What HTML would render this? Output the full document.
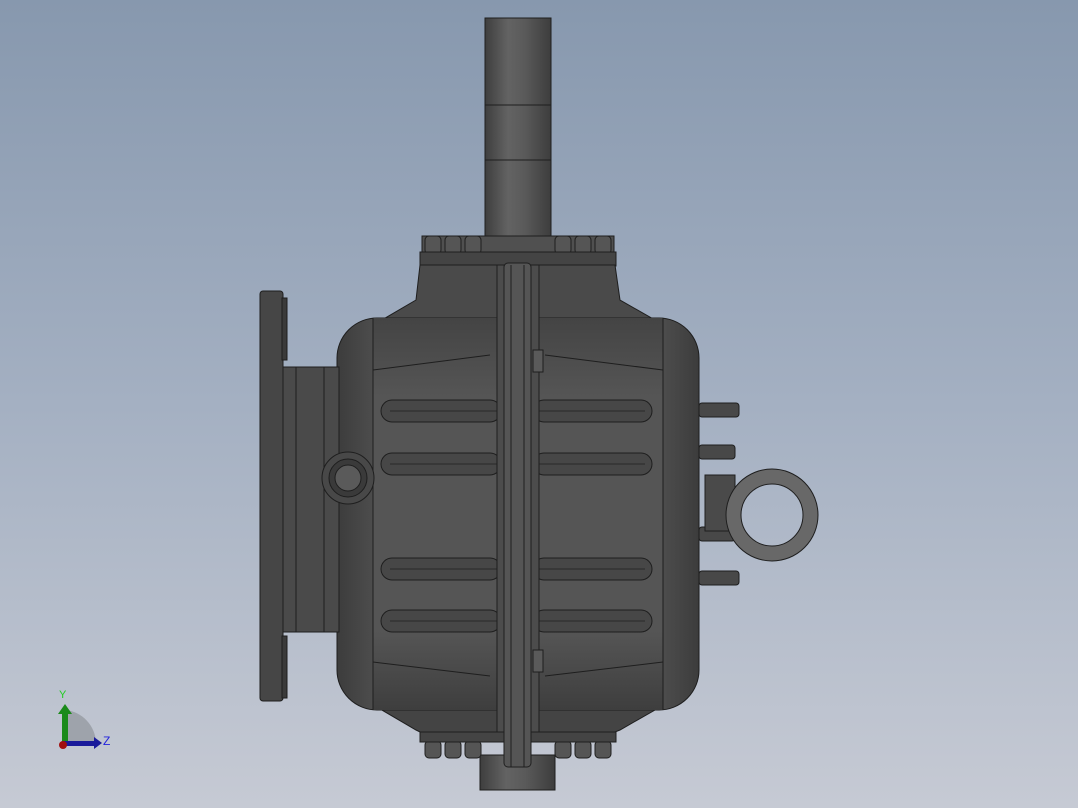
<!DOCTYPE html>
<html><head><style>
html,body{margin:0;padding:0;width:1078px;height:808px;overflow:hidden;}
body{background:linear-gradient(180deg,#8798ae 0%,#a4b0c2 50%,#c6cad4 100%);}
svg{position:absolute;left:0;top:0}
</style></head><body>
<svg width="1078" height="808" viewBox="0 0 1078 808" xmlns="http://www.w3.org/2000/svg">
<defs>
<linearGradient id="sh" x1="0" x2="1" y1="0" y2="0">
<stop offset="0" stop-color="#3e3e3e"/><stop offset="0.35" stop-color="#636363"/><stop offset="0.6" stop-color="#5a5a5a"/><stop offset="1" stop-color="#3d3d3d"/></linearGradient>
<linearGradient id="bd" x1="0" x2="0" y1="0" y2="1">
<stop offset="0" stop-color="#444"/><stop offset="0.2" stop-color="#555"/><stop offset="0.8" stop-color="#555"/><stop offset="1" stop-color="#3e3e3e"/></linearGradient>
<linearGradient id="bh" x1="0" x2="1" y1="0" y2="0">
<stop offset="0" stop-color="#3c3c3c"/><stop offset="0.12" stop-color="#505050"/><stop offset="0.88" stop-color="#505050"/><stop offset="1" stop-color="#3c3c3c"/></linearGradient>
</defs>
<g stroke="#1e1e1e" stroke-width="1">
<rect x="485" y="18" width="66" height="220" fill="url(#sh)"/>
<line x1="485" y1="105" x2="551" y2="105"/><line x1="485" y1="160" x2="551" y2="160"/>
<rect x="480" y="755" width="75" height="35" fill="url(#sh)"/>
<rect x="422" y="236" width="192" height="20" fill="#505050"/>
<g fill="#555"><rect x="425" y="236" width="16" height="18" rx="4"/><rect x="445" y="236" width="16" height="18" rx="4"/><rect x="465" y="236" width="16" height="18" rx="4"/><rect x="555" y="236" width="16" height="18" rx="4"/><rect x="575" y="236" width="16" height="18" rx="4"/><rect x="595" y="236" width="16" height="18" rx="4"/>
<rect x="425" y="741" width="16" height="17" rx="4"/><rect x="445" y="741" width="16" height="17" rx="4"/><rect x="465" y="741" width="16" height="17" rx="4"/><rect x="555" y="741" width="16" height="17" rx="4"/><rect x="575" y="741" width="16" height="17" rx="4"/><rect x="595" y="741" width="16" height="17" rx="4"/></g>
<rect x="420" y="252" width="196" height="14" fill="#444"/>
<rect x="420" y="730" width="196" height="12" fill="#444"/>
<path d="M420 265 L615 265 L620 300 L662 324 L375 324 L416 300 Z" fill="#4a4a4a"/>
<path d="M375 706 L662 706 L620 730 L615 732 L420 732 L416 730 Z" fill="#444"/>
<rect x="337" y="318" width="362" height="392" rx="40" fill="url(#bh)"/>
<rect x="373" y="318" width="290" height="392" fill="url(#bd)" stroke="none"/>
<line x1="373" y1="318" x2="373" y2="710"/><line x1="663" y1="318" x2="663" y2="710"/>
<path d="M373 370 L490 355 M545 355 L663 370 M373 662 L490 676 M545 676 L663 662" fill="none"/>
<rect x="282" y="367" width="57" height="265" fill="#4a4a4a"/>
<line x1="296" y1="367" x2="296" y2="632"/><line x1="324" y1="367" x2="324" y2="632"/>
<rect x="260" y="291" width="23" height="410" rx="3" fill="#464646"/>
<rect x="282" y="298" width="5" height="62" fill="#3a3a3a"/>
<rect x="282" y="636" width="5" height="62" fill="#3a3a3a"/>
<circle cx="348" cy="478" r="26" fill="#484848"/>
<circle cx="348" cy="478" r="19" fill="#3a3a3a"/>
<circle cx="348" cy="478" r="13" fill="#5a5a5a"/>
<g fill="#474747">
<rect x="381" y="400" width="120" height="22" rx="11"/><rect x="533" y="400" width="119" height="22" rx="11"/>
<rect x="381" y="453" width="120" height="22" rx="11"/><rect x="533" y="453" width="119" height="22" rx="11"/>
<rect x="381" y="558" width="120" height="22" rx="11"/><rect x="533" y="558" width="119" height="22" rx="11"/>
<rect x="381" y="610" width="120" height="22" rx="11"/><rect x="533" y="610" width="119" height="22" rx="11"/>
</g>
<g stroke="#2a2a2a"><line x1="390" y1="411" x2="500" y2="411"/><line x1="535" y1="411" x2="645" y2="411"/>
<line x1="390" y1="464" x2="500" y2="464"/><line x1="535" y1="464" x2="645" y2="464"/>
<line x1="390" y1="569" x2="500" y2="569"/><line x1="535" y1="569" x2="645" y2="569"/>
<line x1="390" y1="621" x2="500" y2="621"/><line x1="535" y1="621" x2="645" y2="621"/></g>
<rect x="497" y="265" width="42" height="467" fill="#4c4c4c"/>
<rect x="504" y="263" width="27" height="504" rx="4" fill="#555"/>
<line x1="511" y1="265" x2="511" y2="767"/><line x1="524" y1="265" x2="524" y2="767"/>
<rect x="533" y="350" width="10" height="22" fill="#5a5a5a"/>
<rect x="533" y="650" width="10" height="22" fill="#5a5a5a"/>
<rect x="699" y="403" width="40" height="14" rx="3" fill="#484848"/>
<rect x="699" y="571" width="40" height="14" rx="3" fill="#484848"/>
<rect x="699" y="445" width="36" height="14" rx="3" fill="#484848"/>
<rect x="699" y="527" width="36" height="14" rx="3" fill="#484848"/>
<rect x="705" y="475" width="30" height="56" fill="#4a4a4a"/>
<path d="M772 469 a46 46 0 1 1 0 92 a46 46 0 1 1 0 -92 Z M772 484 a31 31 0 1 0 0 62 a31 31 0 1 0 0 -62 Z" fill="#686868" fill-rule="evenodd"/>
</g>
<path d="M65 710 A34 34 0 0 1 96 743 L65 743 Z" fill="#9ea3ab"/>
<rect x="62" y="712" width="6" height="32" fill="#1a8a1a"/>
<polygon points="58,714 65,704 72,714" fill="#1a8a1a"/>
<rect x="62" y="741" width="34" height="5" fill="#1a1a9a"/>
<polygon points="94,737 102,743 94,749" fill="#1a1a9a"/>
<circle cx="63" cy="745" r="4" fill="#a01010"/>
<text x="59" y="698" font-family="Liberation Sans,sans-serif" font-size="11" fill="#22cc22">Y</text>
<text x="103" y="745" font-family="Liberation Sans,sans-serif" font-size="12" fill="#2222dd">Z</text>
</svg>
</body></html>
